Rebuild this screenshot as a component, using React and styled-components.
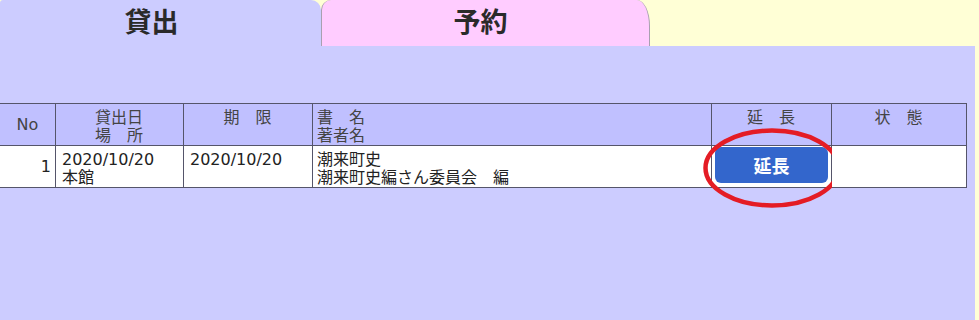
import React from 'react'
import styled, { createGlobalStyle } from 'styled-components'

const GlobalStyle = createGlobalStyle`
    html, body {
        margin: 0;
        padding: 0;
        background: #ffffd6;
    }
    body {
        font-family: "DejaVu Sans", "Noto Sans CJK JP", sans-serif;
    }
`

const Page = styled.div`
    width: 979px;
    height: 320px;
    background: #ffffd6;
    overflow: hidden;
`

const TabBar = styled.div`
    display: flex;
    height: 46px;
`

const Tab = styled.div`
    box-sizing: border-box;
    width: ${p => p.$width}px;
    height: 46px;
    display: flex;
    justify-content: center;
    padding-top: 3px;
    padding-right: ${p => p.$shift}px;
    background: ${p => p.$bg};
    border-left: ${p => p.$bordered ? '1px solid #a8a0b0' : 'none'};
    border-right: ${p => p.$bordered ? '1px solid #a8a0b0' : 'none'};
    border-radius: ${p => p.$radius};
    font-family: "Noto Sans CJK JP", sans-serif;
    font-weight: 700;
    font-size: 27px;
    line-height: 36px;
    color: #2a2a2a;
`

const Panel = styled.div`
    width: 975px;
    height: 274px;
    background: #ccccff;
    padding-top: 57px;
    box-sizing: border-box;
`

const Table = styled.table`
    width: 967px;
    table-layout: fixed;
    border-collapse: separate;
    border-spacing: 0;
    border-top: 1px solid #55556a;
    font-size: 16px;
    line-height: 18px;
`

const Th = styled.th`
    box-sizing: border-box;
    width: ${p => p.$w}px;
    height: 42px;
    padding: ${p => p.$middle ? '0' : '5px 5px 0 4px'};
    background: #c0c0ff;
    color: #444;
    font-weight: 400;
    text-align: ${p => p.$align || 'center'};
    vertical-align: ${p => p.$middle ? 'middle' : 'top'};
    border-right: 1px solid #55556a;
    border-bottom: 1px solid #55556a;
    white-space: pre;
`

const Td = styled.td`
    box-sizing: border-box;
    height: 42px;
    padding: ${p => p.$middle ? '0 4px 0 6px' : `5px 5px 0 ${p.$pl || 6}px`};
    background: #fff;
    color: #222;
    text-align: ${p => p.$align || 'left'};
    vertical-align: ${p => p.$middle ? 'middle' : 'top'};
    border-right: 1px solid #55556a;
    border-bottom: 1px solid #55556a;
    white-space: pre;
    position: relative;
`

const ButtonCell = styled(Td)`
    padding: 0 3px 0 3px;
    text-align: center;
    vertical-align: middle;
`

const ExtendButton = styled.button`
    width: 113px;
    height: 36px;
    margin-top: -3px;
    border: none;
    border-radius: 6px;
    background: #3366cc;
    color: #fff;
    font-family: "Noto Sans CJK JP", sans-serif;
    font-weight: 700;
    font-size: 18px;
    line-height: 36px;
    padding: 0;
    cursor: pointer;
`

const Mark = styled.svg`
    position: absolute;
    left: -9px;
    top: -19px;
    pointer-events: none;
    overflow: visible;
`

const Line = styled.div``

const loans = [
    {
        no: 1,
        date: '2020/10/20',
        place: '本館',
        due: '2020/10/20',
        title: '潮来町史',
        author: '潮来町史編さん委員会　編',
        status: '',
    },
]

const App = () => {
  return (
    <>
    <GlobalStyle />
    <Page>
        <TabBar>
            <Tab $width={321} $shift={18} $bg="#ccccff" $radius="3px 10px 0 0">貸出</Tab>
            <Tab $width={329} $shift={10} $bg="#ffccff" $bordered $radius="10px 13px 0 0 / 10px 26px 0 0">予約</Tab>
        </TabBar>
        <Panel>
            <Table>
                <thead>
                    <tr>
                        <Th $w={56} $middle>No</Th>
                        <Th $w={128}><Line>貸出日</Line><Line>場　所</Line></Th>
                        <Th $w={129}>期　限</Th>
                        <Th $w={399} $align="left"><Line>書　名</Line><Line>著者名</Line></Th>
                        <Th $w={120}>延　長</Th>
                        <Th $w={135}>状　態</Th>
                    </tr>
                </thead>
                <tbody>
                    {loans.map(l => (
                        <tr key={l.no}>
                            <Td $middle $align="right">{l.no}</Td>
                            <Td><Line>{l.date}</Line><Line>{l.place}</Line></Td>
                            <Td>{l.due}</Td>
                            <Td $pl={4}><Line>{l.title}</Line><Line>{l.author}</Line></Td>
                            <ButtonCell>
                                <ExtendButton>延長</ExtendButton>
                                <Mark width="138" height="82" viewBox="0 0 138 82">
                                    <ellipse cx="69" cy="41" rx="66.5" ry="37.5" fill="none" stroke="#e41c25" strokeWidth="4.5" />
                                </Mark>
                            </ButtonCell>
                            <Td>{l.status}</Td>
                        </tr>
                    ))}
                </tbody>
            </Table>
        </Panel>
    </Page>
    </>
  )
}

export default App
